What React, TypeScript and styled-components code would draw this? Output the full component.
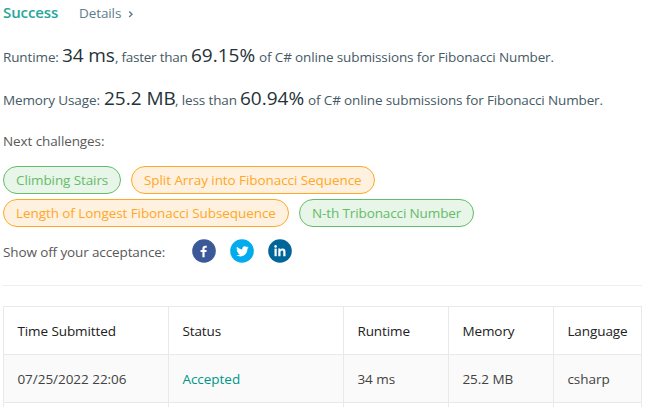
import React from "react";
import styled, { createGlobalStyle } from "styled-components";

const GlobalStyle = createGlobalStyle`
  * { box-sizing: border-box; }
  html, body { margin: 0; padding: 0; background: #fff; overflow: hidden; }
  body {
    font-family: "Segoe UI", "Open Sans", "Noto Sans", sans-serif;
    font-size: 13.5px;
    letter-spacing: -0.1px;
    color: #546e7a;
  }
`;

const Page = styled.main`
  width: 646px;
  height: 407px;
  padding: 0 4px 0 3px;
  overflow: hidden;
  display: flex;
  flex-direction: column;
  white-space: nowrap;

  > * {
    flex: none;
  }
`;

const Header = styled.header`
  display: flex;
  align-items: baseline;
  height: 34px;
  line-height: 25px;
`;

const Status = styled.strong`
  width: 76px;
  font-size: 15px;
  font-weight: 600;
  color: #26a69a;
`;

const DetailsLink = styled.a`
  display: flex;
  align-items: center;
  gap: 7px;
  color: #607d8b;
`;

const Metric = styled.p`
  margin: 0;
  height: 43px;
  line-height: 43px;
  display: flex;
  align-items: baseline;
  color: #455a64;
`;

const Segment = styled.span<{ $w: number; $ls?: number }>`
  flex: none;
  width: ${(p) => p.$w}px;
  letter-spacing: ${(p) => p.$ls ?? -0.12}px;
  white-space: pre;
`;

const Figure = styled(Segment)`
  font-size: 19px;
  color: #263238;
`;

const Subheading = styled.p`
  margin: 0;
  height: 46px;
  padding-top: 8px;
  line-height: 27px;
  color: #595959;
`;

const Tags = styled.div`
  display: flex;
  flex-wrap: wrap;
  gap: 5px 10px;
`;

const Tag = styled.a<{ $level: "easy" | "medium"; $w: number; $ls: number }>`
  width: ${(p) => p.$w}px;
  height: 28px;
  padding-left: 12px;
  line-height: 26px;
  border: 1px solid ${(p) => (p.$level === "easy" ? "#66bb6a" : "#ffa726")};
  border-radius: 14px;
  background: ${(p) => (p.$level === "easy" ? "#e8f5e9" : "#fff1e0")};
  color: ${(p) => (p.$level === "easy" ? "#66bb6a" : "#ffa726")};
  letter-spacing: ${(p) => p.$ls}px;
`;

const Share = styled.div`
  display: flex;
  align-items: center;
  height: 48px;
  color: #595959;
`;

const ShareLabel = styled.span`
  width: 189px;
  padding-top: 1px;
  letter-spacing: -0.12px;
`;

const Social = styled.a`
  display: flex;
  margin-right: 14px;
`;

const Divider = styled.hr`
  width: 639px;
  height: 1px;
  margin: 10px 0 20px;
  border: 0;
  background: #eee;
`;

const Table = styled.table`
  width: 639px;
  table-layout: fixed;
  border-collapse: separate;
  border-spacing: 0;
  border-top: 1px solid #e9e9e9;
  border-left: 1px solid #e9e9e9;
`;

const Row = styled.tr<{ $shaded?: boolean }>`
  height: 48px;
  background: ${(p) => (p.$shaded ? "#fafafa" : "#fff")};
`;

const Cell = styled.td<{ $tone?: "head" | "accepted" }>`
  padding: 1px 0 0 13.4px;
  text-align: left;
  font-weight: 400;
  letter-spacing: ${(p) => (p.$tone === "head" ? -0.08 : -0.03)}px;
  border-right: 1px solid #e9e9e9;
  border-bottom: 1px solid #e9e9e9;
  color: ${(p) => (p.$tone === "head" ? "#212121" : p.$tone === "accepted" ? "#009688" : "#424242")};
`;

const Chevron = () => (
  <svg width="6" height="9" viewBox="0 0 6 9" fill="none" stroke="#607d8b" strokeWidth="1.4">
    <path d="M1.2 2.4 4 5.2 1.2 8" />
  </svg>
);

const Facebook = () => (
  <svg width="24" height="24" viewBox="0 0 24 24">
    <circle cx="12" cy="12" r="11.8" fill="#3b5998" />
    <path
      fill="#fff"
      transform="translate(0 .4)"
      d="M10.4 17.8v-5.1H8.6v-2h1.8V9.2c0-1.9 1-2.9 2.7-2.9.8 0 1.5.1 1.7.1v1.9h-1.1c-.9 0-1.1.5-1.1 1.1v1.3h2.1l-.3 2h-1.8v5.1z"
    />
  </svg>
);

const Twitter = () => (
  <svg width="24" height="24" viewBox="0 0 24 24">
    <circle cx="12" cy="12" r="11.8" fill="#00aced" />
    <path
      fill="#fff"
      transform="translate(6.2 6.1) scale(.52)"
      d="M23.95 4.57a10 10 0 0 1-2.82.78 4.96 4.96 0 0 0 2.16-2.73c-.95.56-2 .96-3.13 1.19a4.92 4.92 0 0 0-8.38 4.48C7.69 8.1 4.07 6.13 1.64 3.16a4.92 4.92 0 0 0 1.52 6.57 4.9 4.9 0 0 1-2.23-.61v.06a4.92 4.92 0 0 0 3.95 4.83 5 5 0 0 1-2.21.08 4.94 4.94 0 0 0 4.6 3.42A9.87 9.87 0 0 1 0 19.54a14 14 0 0 0 7.55 2.21c9.05 0 14-7.5 14-13.98 0-.21 0-.42-.02-.63a9.94 9.94 0 0 0 2.42-2.57z"
    />
  </svg>
);

const LinkedIn = () => (
  <svg width="24" height="24" viewBox="0 0 24 24">
    <circle cx="12" cy="12" r="11.8" fill="#006699" />
    <g fill="#fff">
      <circle cx="7.6" cy="7.4" r="1.3" />
      <rect x="6.5" y="9.6" width="2.2" height="7.6" />
      <path d="M10.3 9.6h2.1v1c.4-.7 1.2-1.2 2.3-1.2 2.2 0 2.8 1.4 2.8 3.4v4.4h-2.2v-3.9c0-.9-.1-1.9-1.2-1.9-1.2 0-1.6.9-1.6 1.9v3.9h-2.2z" />
    </g>
  </svg>
);

export default function App() {
  return (
    <>
      <GlobalStyle />
      <Page>
        <Header>
          <Status>Success</Status>
          <DetailsLink>
            Details
            <Chevron />
          </DetailsLink>
        </Header>
        <Metric>
          <Segment $w={59}>Runtime:</Segment>
          <Figure $w={53}>34 ms</Figure>
          <Segment $w={76} $ls={-0.25}>, faster than</Segment>
          <Figure $w={68} $ls={0}>69.15%</Figure>
          <Segment $w={300} $ls={-0.13}>of C# online submissions for Fibonacci Number.</Segment>
        </Metric>
        <Metric>
          <Segment $w={101}>Memory Usage:</Segment>
          <Figure $w={71} $ls={0}>25.2 MB</Figure>
          <Segment $w={65}>, less than</Segment>
          <Figure $w={68} $ls={0}>60.94%</Figure>
          <Segment $w={300} $ls={-0.13}>of C# online submissions for Fibonacci Number.</Segment>
        </Metric>
        <Subheading>Next challenges:</Subheading>
        <Tags>
          <Tag $level="easy" $w={118} $ls={-0.1}>Climbing Stairs</Tag>
          <Tag $level="medium" $w={244} $ls={-0.07}>Split Array into Fibonacci Sequence</Tag>
          <Tag $level="medium" $w={286} $ls={-0.08}>Length of Longest Fibonacci Subsequence</Tag>
          <Tag $level="easy" $w={175} $ls={-0.12}>N-th Tribonacci Number</Tag>
        </Tags>
        <Share>
          <ShareLabel>Show off your acceptance:</ShareLabel>
          <Social><Facebook /></Social>
          <Social><Twitter /></Social>
          <Social><LinkedIn /></Social>
        </Share>
        <Divider />
        <Table>
          <colgroup>
            <col width="165" />
            <col width="175" />
            <col width="105" />
            <col width="105" />
            <col width="88" />
          </colgroup>
          <tbody>
            <Row>
              <Cell as="th" $tone="head">Time Submitted</Cell>
              <Cell as="th" $tone="head">Status</Cell>
              <Cell as="th" $tone="head">Runtime</Cell>
              <Cell as="th" $tone="head">Memory</Cell>
              <Cell as="th" $tone="head">Language</Cell>
            </Row>
            <Row $shaded>
              <Cell>07/25/2022 22:06</Cell>
              <Cell $tone="accepted">Accepted</Cell>
              <Cell>34 ms</Cell>
              <Cell>25.2 MB</Cell>
              <Cell>csharp</Cell>
            </Row>
            <Row>
              <Cell />
              <Cell />
              <Cell />
              <Cell />
              <Cell />
            </Row>
          </tbody>
        </Table>
      </Page>
    </>
  );
}
